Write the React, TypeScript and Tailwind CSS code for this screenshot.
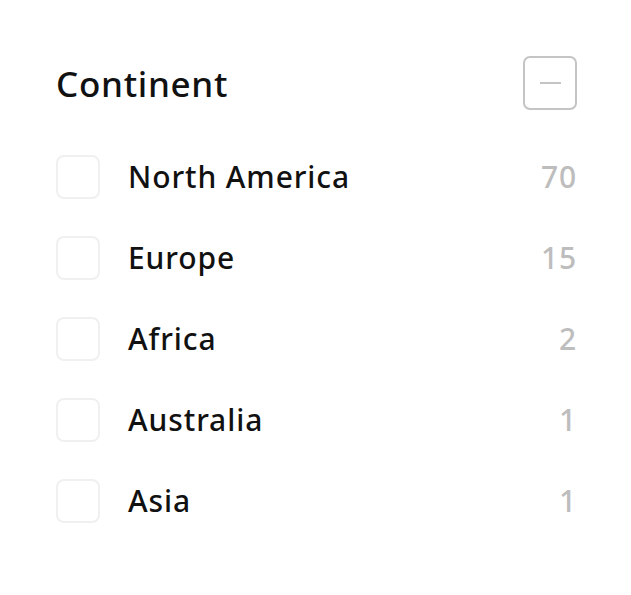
import React from "react";

const items: [string, number][] = [
  ["North America", 70],
  ["Europe", 15],
  ["Africa", 2],
  ["Australia", 1],
  ["Asia", 1],
];

export default function App() {
  return (
    <div className="w-[631px] h-[595px] bg-white pl-[56px] pr-[54px] pt-[56px]" style={{ fontFamily: '"Noto Sans", sans-serif' }}>
      <div className="flex items-center justify-between h-[54px]">
        <h2 className="text-[35px] font-medium text-[#111] leading-none tracking-[0.02em]">Continent</h2>
        <button className="w-[54px] h-[54px] rounded-[7px] border-2 border-[#c4c4c4] flex items-center justify-center">
          <span className="block w-[21px] h-[2px] bg-[#c4c4c4]" />
        </button>
      </div>
      <div className="mt-[45px] flex flex-col gap-[37px]">
        {items.map(([name, n]) => (
          <div key={name} className="flex items-center h-[44px]">
            <div className="w-[44px] h-[44px] rounded-[8px] border-2 border-[#f0f0f0]" />
            <span className="ml-[28px] text-[30px] font-medium text-[#111] leading-none tracking-[0.03em]">{name}</span>
            <span className="ml-auto text-[30px] font-medium text-[#bdbdbd] leading-none tracking-[0.03em]">{n}</span>
          </div>
        ))}
      </div>
    </div>
  );
}
